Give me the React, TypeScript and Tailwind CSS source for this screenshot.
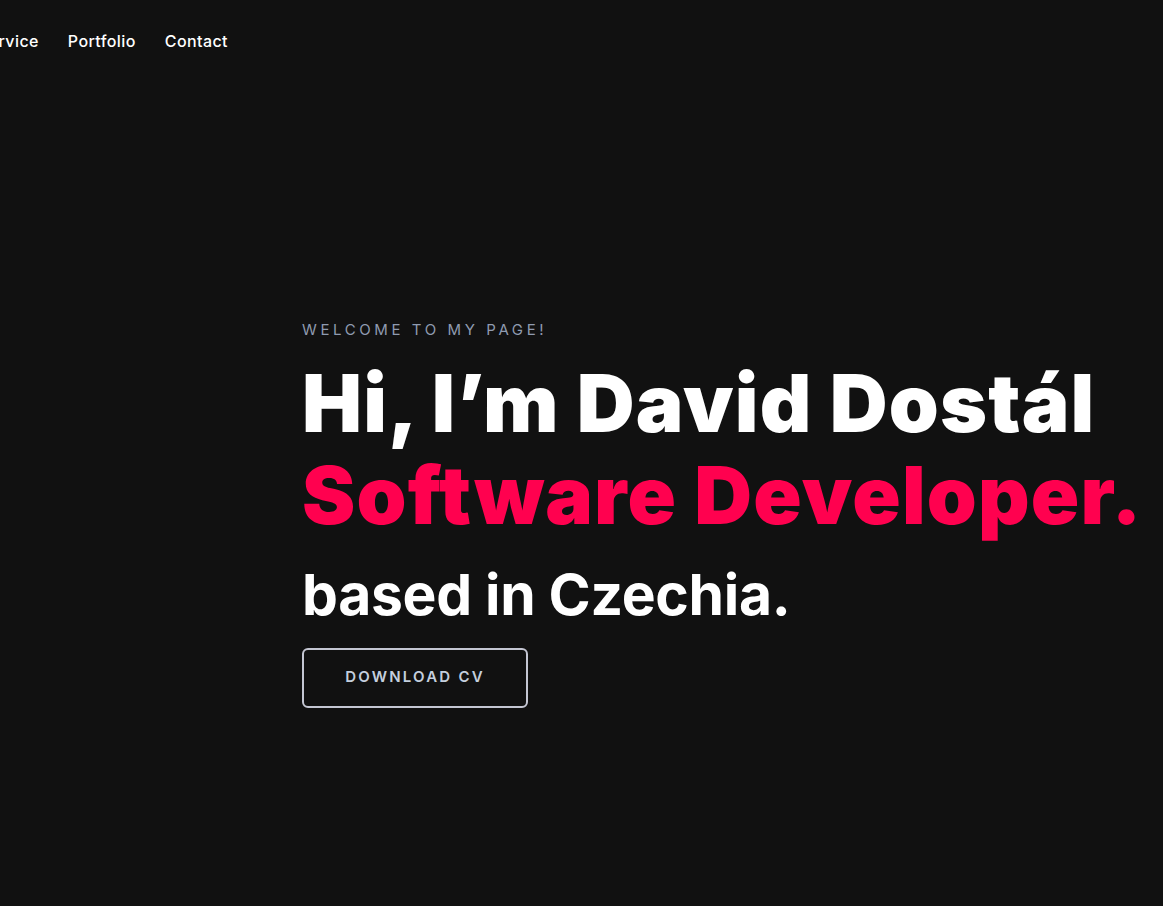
const navItems = ["Service", "Portfolio", "Contact"];

export default function App() {
  return (
    <div className="min-h-[906px] w-full overflow-hidden bg-[#111111] font-['Inter',sans-serif] text-white">
      <header className="flex h-[82px] items-center">
        <nav className="ml-[-22px] flex items-center gap-[29px]">
          {navItems.map((item) => (
            <a key={item} href="#" className="text-[16px] font-medium tracking-[0.4px] text-white">
              {item}
            </a>
          ))}
        </nav>
      </header>

      <section className="pl-[302px] pt-[237px]">
        <p className="text-[15px] font-normal uppercase tracking-[3.6px] text-[#8f9bb0]">
          Welcome to my page!
        </p>
        <h1 className="mt-[15px] text-[80px] font-black leading-[92px] tracking-[1.2px]">
          <span className="block">Hi, I’m David Dostál</span>
          <span className="block text-[#ff014f]">Software Developer.</span>
        </h1>
        <h2 className="mt-[19px] text-[57px] font-bold leading-[70px] tracking-[-0.3px]">
          based in Czechia.
        </h2>
        <button className="mt-[18px] flex h-[60px] w-[226px] items-center justify-center rounded-[6px] border-2 border-[#c4c6d2] text-[15px] font-semibold uppercase tracking-[2.2px] text-[#c4cfde]">
          Download CV
        </button>
      </section>
    </div>
  );
}
